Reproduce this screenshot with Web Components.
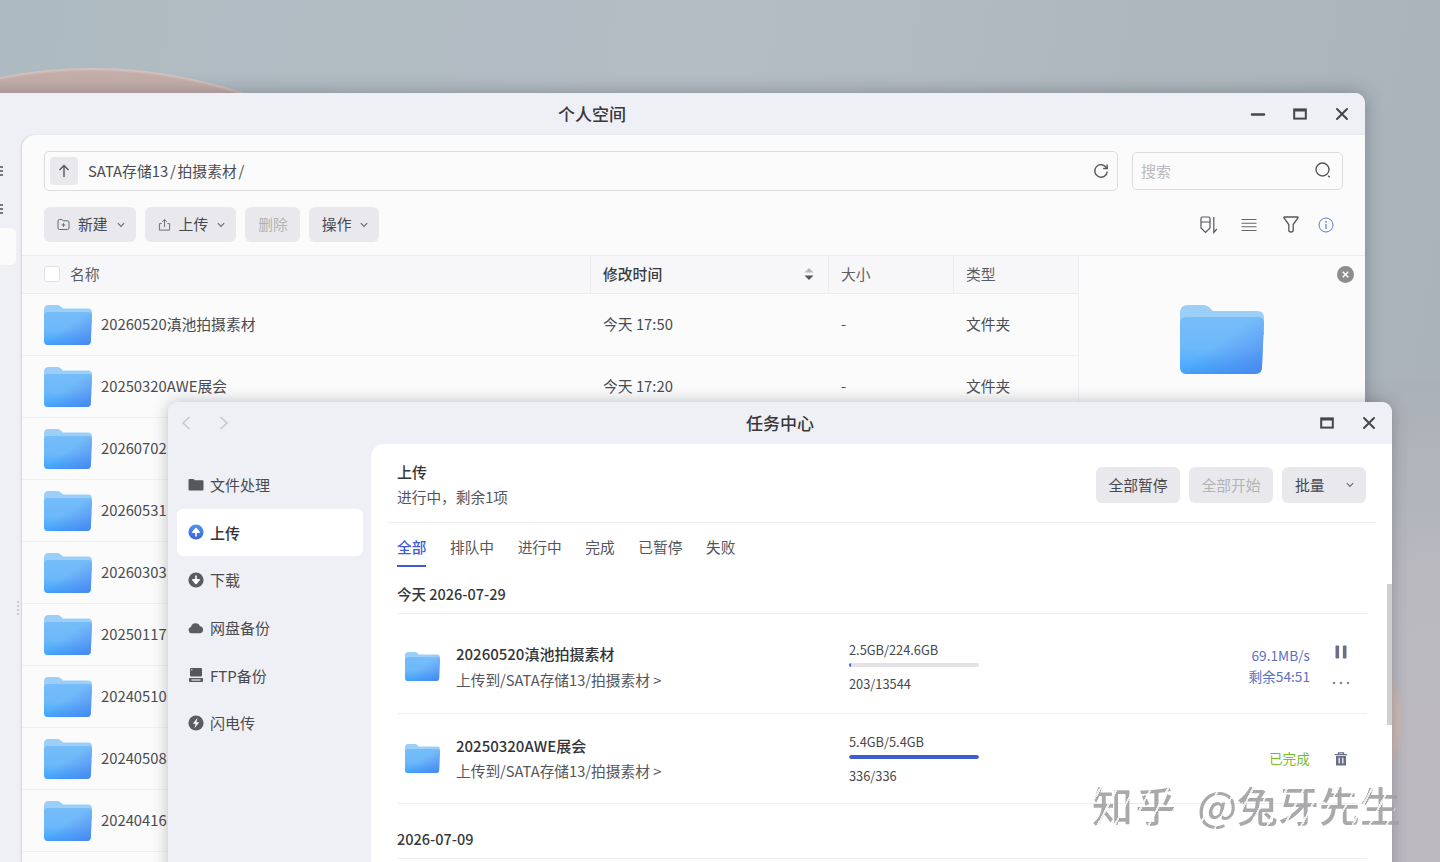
<!DOCTYPE html>
<html lang="zh-CN">
<head>
<meta charset="utf-8">
<title>个人空间</title>
<style>
    html, body { margin: 0; height: 100%; overflow: hidden; }
    body { font-family: "Noto Sans CJK SC", "Noto Sans", sans-serif; color: #44454a; }
</style>
</head>
<body>
<desk-top>
    <file-window>
        <file-row name="20260520滇池拍摄素材" date="今天 17:50"></file-row>
        <file-row name="20250320AWE展会" date="今天 17:20"></file-row>
        <file-row name="20260702"></file-row>
        <file-row name="20260531"></file-row>
        <file-row name="20260303"></file-row>
        <file-row name="20250117"></file-row>
        <file-row name="20240510"></file-row>
        <file-row name="20240508"></file-row>
        <file-row name="20240416"></file-row>
    </file-window>
    <task-window>
        <side-item icon="folder" label="文件处理"></side-item>
        <side-item icon="upload" label="上传" active></side-item>
        <side-item icon="download" label="下载"></side-item>
        <side-item icon="cloud" label="网盘备份"></side-item>
        <side-item icon="ftp" label="FTP备份"></side-item>
        <side-item icon="flash" label="闪电传"></side-item>
        <task-group slot="list" title="今天 2026-07-29"></task-group>
        <task-item slot="list" tall name="20260520滇池拍摄素材" size="2.5GB/224.6GB" count="203/13544" percent="1.5"></task-item>
        <task-item slot="list" done name="20250320AWE展会" size="5.4GB/5.4GB" count="336/336" percent="100"></task-item>
        <task-group slot="list" late title="2026-07-09"></task-group>
    </task-window>
    <water-mark><span style="letter-spacing:2.5px">知乎</span> @兔牙先生</water-mark>
</desk-top>

<script>
/**
 * Icones dessinees en SVG, reprises par tous les composants
 */
const ICONS = {
    min: '<svg width="16" height="16" viewBox="0 0 16 16"><path d="M2 8.5h12" stroke="#45464b" stroke-width="2.4" stroke-linecap="round"/></svg>',
    max: '<svg width="16" height="16" viewBox="0 0 16 16"><rect x="2.2" y="3.4" width="11.6" height="9.2" fill="none" stroke="#45464b" stroke-width="2"/><path d="M2 4.4h12" stroke="#45464b" stroke-width="2"/></svg>',
    close: '<svg width="16" height="16" viewBox="0 0 16 16"><path d="M3 3l10 10M13 3L3 13" stroke="#45464b" stroke-width="2" stroke-linecap="round"/></svg>',
    up: '<svg width="14" height="14" viewBox="0 0 14 14"><path d="M7 13V1.500M2.500 6L7 1.500 11.500 6" fill="none" stroke="#55565b" stroke-width="1.400"/></svg>',
    refresh: '<svg width="16" height="16" viewBox="0 0 16 16"><path d="M13.600 5A6.300 6.300 0 1 0 14.300 8.600" fill="none" stroke="#55565b" stroke-width="1.400"/><path d="M14.200 1.500V5.500H10.200" fill="none" stroke="#55565b" stroke-width="1.400"/></svg>',
    search: '<svg width="18" height="18" viewBox="0 0 18 18"><circle cx="8.500" cy="8.500" r="6.500" fill="none" stroke="#55565b" stroke-width="1.400"/><path d="M14.200 14.800l1.500 1.500" stroke="#55565b" stroke-width="1.400"/></svg>',
    chevron: '<svg width="8" height="6" viewBox="0 0 8 6"><path d="M.8 1.200L4 4.400l3.200-3.200" fill="none" stroke="#66676c" stroke-width="1.100"/></svg>',
    newFolder: '<svg width="13" height="13" viewBox="0 0 13 13"><path d="M1 3q0-1.500 1.500-1.500h2.500l1.200 1.300h4.300q1.500 0 1.500 1.500v5.700q0 1.500-1.500 1.500h-8q-1.500 0-1.500-1.500z" fill="none" stroke="#66676c"/><path d="M6.500 5.200v3.600M4.700 7h3.600" stroke="#66676c"/></svg>',
    share: '<svg width="13" height="14" viewBox="0 0 14 14"><path d="M4 5.500H1.500v7h11v-7H10" fill="none" stroke="#66676c"/><path d="M7 9V1.200M4.500 3.600L7 1.200l2.500 2.400" fill="none" stroke="#66676c"/></svg>',
    sort: '<svg width="18" height="18" viewBox="0 0 18 18"><path d="M1 2.500q0-1.500 1.500-1.500h6q1.500 0 1.500 1.500V12l-4.500 4.500L1 12z" fill="none" stroke="#55565b" stroke-width="1.200"/><path d="M1 6h9" stroke="#55565b" stroke-width="1.200"/><path d="M13.800 1v15.500l3-3.500" fill="none" stroke="#55565b" stroke-width="1.200"/></svg>',
    list: '<svg width="16" height="16" viewBox="0 0 16 16"><path d="M.5 2.500h15M.5 6.200h15M.5 9.800h15M.5 13.500h15" stroke="#66676c" stroke-width="1.100"/></svg>',
    filter: '<svg width="16" height="17" viewBox="0 0 16 17"><path d="M1.500 1h13q1 0 .4 1l-4.700 6.500V14q0 2-2.200 2t-2.200-2V8.500L1 2q-.5-1 .5-1z" fill="none" stroke="#55565b" stroke-width="1.300"/></svg>',
    info: '<svg width="16" height="16" viewBox="0 0 16 16"><circle cx="8" cy="8" r="7" fill="none" stroke="#5f7cc9" stroke-width="1"/><path d="M8 7v5" stroke="#5f7cc9" stroke-width="1.200"/><circle cx="8" cy="4.800" r=".9" fill="#5f7cc9"/></svg>',
    sortCaret: '<svg width="10" height="12" viewBox="0 0 10 12"><path d="M5 0l4.500 4.500h-9z" fill="#b5b6ba"/><path d="M5 12L.5 7.500h9z" fill="#55565b"/></svg>',
    dismiss: '<svg width="17" height="17" viewBox="0 0 17 17"><circle cx="8.500" cy="8.500" r="8.500" fill="#8d8d8f"/><path d="M5.700 5.700l5.600 5.600M11.300 5.700l-5.600 5.600" stroke="#fff" stroke-width="1.500"/></svg>',
    back: '<svg width="10" height="14" viewBox="0 0 10 14"><path d="M8.500 1L2 7l6.500 6" fill="none" stroke="#c6c8cd" stroke-width="1.500"/></svg>',
    forward: '<svg width="10" height="14" viewBox="0 0 10 14"><path d="M1.500 1L8 7l-6.500 6" fill="none" stroke="#c6c8cd" stroke-width="1.500"/></svg>',
    folder: '<svg width="16" height="16" viewBox="0 0 16 16"><path d="M.5 3q0-1 1-1h4l1.300 1.200h7.700q1 0 1 1v8.300q0 1-1 1h-13q-1 0-1-1z" fill="#56575c"/></svg>',
    upload: '<svg width="16" height="16" viewBox="0 0 16 16"><defs><linearGradient id="u" x1="0" y1="0" x2="0" y2="1"><stop offset="0" stop-color="#4f97ee"/><stop offset="1" stop-color="#3f63dc"/></linearGradient></defs><circle cx="8" cy="8" r="7.600" fill="url(#u)"/><path d="M8 12.500V6.800M4.800 8.200L8 4.500l3.200 3.700z" stroke="#fff" stroke-width="1.600" fill="#fff" stroke-linejoin="round"/></svg>',
    download: '<svg width="16" height="16" viewBox="0 0 16 16"><circle cx="8" cy="8" r="7.600" fill="#5b5c61"/><path d="M8 3.500v5.700M4.800 7.800L8 11.500l3.200-3.700z" stroke="#fff" stroke-width="1.600" fill="#fff" stroke-linejoin="round"/></svg>',
    cloud: '<svg width="16" height="16" viewBox="0 0 16 16"><path d="M3.600 13.200a3.100 3.100 0 0 1-.6-6.100A4.600 4.600 0 0 1 11.900 6.300a3.500 3.500 0 0 1 .4 6.900z" fill="#5b5c61"/></svg>',
    ftp: '<svg width="16" height="16" viewBox="0 0 16 16"><rect x="2" y="1" width="12" height="8.500" rx="1" fill="#56575c"/><rect x="1" y="11" width="14" height="4" rx="1" fill="#56575c"/><rect x="3.400" y="12.400" width="9.200" height="1.200" fill="#eff0f5"/><circle cx="3.800" cy="2.900" r=".7" fill="#eff0f5"/></svg>',
    flash: '<svg width="16" height="16" viewBox="0 0 16 16"><circle cx="8" cy="8" r="7.600" fill="#5b5c61"/><path d="M9.500 2.800L4.800 8.800h2.800l-1.100 4.400 4.700-6h-2.800z" fill="#fff"/></svg>',
    pause: '<svg width="14" height="14" viewBox="0 0 14 14"><rect x="1.500" y=".5" width="3.600" height="13" rx=".8" fill="#696d87"/><rect x="8.900" y=".5" width="3.600" height="13" rx=".8" fill="#696d87"/></svg>',
    more: '<svg width="18" height="4" viewBox="0 0 18 4"><circle cx="2" cy="2" r="1.300" fill="#8b8c90"/><circle cx="9" cy="2" r="1.300" fill="#8b8c90"/><circle cx="16" cy="2" r="1.300" fill="#8b8c90"/></svg>',
    trash: '<svg width="14" height="14" viewBox="0 0 14 14"><path d="M.8 2.600h12.400M4.500 2.400V.8h5v1.600" fill="none" stroke="#696d87" stroke-width="1.300"/><path d="M2 4h10v9.500H2z" fill="#696d87"/><path d="M5.200 5.800v5.800M8.800 5.800v5.800" stroke="#fff" stroke-width="1.200"/></svg>'
};

class FolderIcon extends HTMLElement {
    constructor() {
        super();
        const width = this.getAttribute('width') || 48;
        const height = this.getAttribute('height') || 40;
        const root = this.attachShadow({mode: 'open'});
        root.innerHTML = `
            <style>
                :host { display: inline-flex; flex: none; }
            </style>
            <svg width="${width}" height="${height}" viewBox="0 0 84 69" preserveAspectRatio="none">
                <defs>
                    <linearGradient id="down" x1="0" y1="0" x2="0" y2="1">
                        <stop offset="0" stop-color="#76bdf9"/>
                        <stop offset=".55" stop-color="#6db8fa"/>
                        <stop offset="1" stop-color="#3fa6fc"/>
                    </linearGradient>
                    <linearGradient id="side" x1="0" y1="0" x2="1" y2="1">
                        <stop offset=".45" stop-color="#4a7fee" stop-opacity="0"/>
                        <stop offset="1" stop-color="#4a7fee" stop-opacity=".8"/>
                    </linearGradient>
                </defs>
                <path d="M0 8Q0 0 8 0H24Q27 0 30 3L33 6H77Q84 6 84 13V30H0Z" fill="#9bcff8"/>
                <path d="M6 12H78Q84 12 84 18L82 62Q82 69 75 69H6Q0 69 0 62V18Q0 12 6 12Z" fill="url(#down)"/>
                <path d="M6 12H78Q84 12 84 18L82 62Q82 69 75 69H6Q0 69 0 62V18Q0 12 6 12Z" fill="url(#side)"/>
            </svg>`;
    }
}

class TitleBar extends HTMLElement {
    constructor() {
        super();
        const title = this.getAttribute('title') || '';
        const buttons = (this.getAttribute('buttons') || 'max,close').split(',');
        const root = this.attachShadow({mode: 'open'});
        root.innerHTML = `
            <style>
                :host {
                    display: grid;
                    grid-template-columns: 1fr auto 1fr;
                    align-items: center;
                    height: 42px;
                    background: #eff0f5;
                    flex: none;
                }
                .title { font-size: 17px; font-weight: 500; color: #37383c; padding-bottom: 2px; }
                .buttons { display: flex; justify-content: flex-end; gap: 26px; padding-right: 15px; }
                .buttons span { display: flex; }
                .left { display: flex; }
            </style>
            <div class="left"><slot></slot></div>
            <div class="title">${title}</div>
            <div class="buttons">${buttons.map((b) => `<span>${ICONS[b]}</span>`).join('')}</div>`;
    }
}

class ToolButton extends HTMLElement {
    constructor() {
        super();
        const icon = this.getAttribute('icon');
        const menu = this.hasAttribute('menu');
        const root = this.attachShadow({mode: 'open'});
        root.innerHTML = `
            <style>
                :host {
                    display: inline-flex;
                    align-items: center;
                    height: 100%;
                    padding: 0 11px 0 13px;
                    box-sizing: border-box;
                    background: #e9e9ed;
                    border-radius: 6px;
                    font-size: 14.8px;
                    color: #47484d;
                    white-space: nowrap;
                }
                :host([disabled]) { color: #b2b3b7; padding: 0 12px 0 13px; }
                span { display: flex; }
                .icon { margin-right: 8px; }
                .text { padding-bottom: 2px; }
                .menu { margin-left: var(--menu-gap, 9px); }
            </style>
            ${icon ? `<span class="icon">${ICONS[icon]}</span>` : ''}
            <span class="text"><slot></slot></span>
            ${menu ? `<span class="menu">${ICONS.chevron}</span>` : ''}`;
    }
}

class FileRow extends HTMLElement {
    constructor() {
        super();
        const name = this.getAttribute('name') || '';
        const date = this.getAttribute('date') || '';
        const root = this.attachShadow({mode: 'open'});
        root.innerHTML = `
            <style>
                :host {
                    display: grid;
                    grid-template-columns: 568px 238px 125px 125px;
                    height: 62px;
                    box-sizing: border-box;
                    border-bottom: 1px solid #f0f0f3;
                    align-items: center;
                    font-size: 14.8px;
                    color: #4a4b50;
                }
                .name { display: flex; align-items: center; gap: 9px; padding-left: 22px; white-space: nowrap; }
                .name span { padding-bottom: 2px; }
                .cell { padding: 0 0 2px 13px; }
            </style>
            <div class="name"><folder-icon></folder-icon><span>${name}</span></div>
            ${date ? `<div class="cell">${date}</div><div class="cell">-</div><div class="cell">文件夹</div>` : ''}`;
    }
}

class FileWindow extends HTMLElement {
    constructor() {
        super();
        const root = this.attachShadow({mode: 'open'});
        root.innerHTML = `
            <style>
                :host {
                    position: absolute;
                    left: -181px;
                    top: 93px;
                    width: 1546px;
                    height: 820px;
                    display: flex;
                    flex-direction: column;
                    background: #eff0f5;
                    border-radius: 10px 10px 0 0;
                    box-shadow: 0 0 18px rgba(40, 45, 55, .35);
                    overflow: hidden;
                }
                .body { flex: 1; display: grid; grid-template-columns: 203px 1fr; min-height: 0; }
                .side { position: relative; display: flex; flex-direction: column; gap: 1px; padding: 17px 6px 0 0; }
                .side div { height: 37px; display: flex; align-items: center; justify-content: flex-end; padding-right: 13px; }
                .side i { display: block; width: 4px; height: 10px; background: repeating-linear-gradient(#77787c 0 2px, transparent 2px 4px); }
                .side .on { background: #fbfbfc; border-radius: 0 5px 5px 0; }
                .handle { position: absolute; left: 198px; top: 466px; width: 2px; height: 14px; background: repeating-linear-gradient(#c9cace 0 2px, transparent 2px 4px); }
                .panel {
                    display: flex;
                    flex-direction: column;
                    background: #fbfbfc;
                    border-radius: 13px 0 0 0;
                    box-shadow: -1px 0 2px rgba(0, 0, 0, .12);
                    min-width: 0;
                }
                .pathrow { display: flex; align-items: center; gap: 14px; padding: 16px 22px 0; }
                .path {
                    flex: 1;
                    height: 40px;
                    display: flex;
                    align-items: center;
                    padding: 0 8px 0 5px;
                    box-sizing: border-box;
                    border: 1px solid #dcdcdf;
                    border-radius: 5px;
                    font-size: 14.8px;
                    color: #4a4b50;
                }
                .up { width: 28px; height: 28px; display: flex; align-items: center; justify-content: center; background: #e9e9ed; border-radius: 4px; margin-right: 10px; }
                .crumbs { flex: 1; word-spacing: -1.500px; padding-bottom: 2px; }
                .path span, .search span { display: flex; }
                .search {
                    width: 211px;
                    height: 38px;
                    display: flex;
                    align-items: center;
                    justify-content: space-between;
                    padding: 0 10px 2px 8px;
                    box-sizing: border-box;
                    border: 1px solid #dcdcdf;
                    border-radius: 5px;
                    font-size: 15px;
                    color: #b9babd;
                }
                .toolbar { display: flex; align-items: center; height: 35px; margin-top: 16px; padding: 0 31px 0 22px; gap: 9px; }
                .tools { margin-left: auto; display: flex; align-items: center; }
                .tools span { display: flex; }
                .main { flex: 1; display: grid; grid-template-columns: 1057px 1fr; margin-top: 13px; border-top: 1px solid #ececef; min-height: 0; }
                .table { border-right: 1px solid #f0f0f3; min-width: 0; }
                .head {
                    display: grid;
                    grid-template-columns: 568px 238px 125px 125px;
                    height: 38px;
                    box-sizing: border-box;
                    background: #f7f7f9;
                    border-bottom: 1px solid #ececef;
                    font-size: 14.8px;
                    color: #5c5d62;
                }
                .head div { display: flex; align-items: center; padding: 0 0 2px 12px; border-left: 1px solid #ececef; }
                .head .first { padding-left: 22px; border-left: 0; gap: 10px; }
                .check { width: 14px; height: 14px; background: #fff; border: 1px solid #e2e2e5; border-radius: 3px; }
                .head b { font-weight: 500; color: #3a3b3f; flex: 1; }
                .head .caret { display: flex; padding: 0 14px 0 0; border: 0; }
                .info { position: relative; display: flex; justify-content: center; padding-top: 49px; }
                .dismiss { position: absolute; right: 11px; top: 10px; display: flex; }
            </style>
            <title-bar title="个人空间" buttons="min,max,close"></title-bar>
            <div class="body">
                <div class="side">
                    <div><i></i></div>
                    <div><i></i></div>
                    <div class="on"></div>
                    <span class="handle"></span>
                </div>
                <div class="panel">
                    <div class="pathrow">
                        <div class="path">
                            <span class="up">${ICONS.up}</span>
                            <div class="crumbs">SATA存储13 / 拍摄素材 /</div>
                            <span>${ICONS.refresh}</span>
                        </div>
                        <div class="search">搜索<span>${ICONS.search}</span></div>
                    </div>
                    <div class="toolbar">
                        <tool-button icon="newFolder" menu>新建</tool-button>
                        <tool-button icon="share" menu>上传</tool-button>
                        <tool-button disabled>删除</tool-button>
                        <tool-button menu>操作</tool-button>
                        <div class="tools">
                            <span style="margin-right:23px">${ICONS.sort}</span>
                            <span style="margin-right:26px">${ICONS.list}</span>
                            <span style="margin-right:19px">${ICONS.filter}</span>
                            <span>${ICONS.info}</span>
                        </div>
                    </div>
                    <div class="main">
                        <div class="table">
                            <div class="head">
                                <div class="first"><span class="check"></span>名称</div>
                                <div><b>修改时间</b><span class="caret">${ICONS.sortCaret}</span></div>
                                <div>大小</div>
                                <div>类型</div>
                            </div>
                            <slot></slot>
                        </div>
                        <div class="info">
                            <span class="dismiss">${ICONS.dismiss}</span>
                            <folder-icon width="84" height="69"></folder-icon>
                        </div>
                    </div>
                </div>
            </div>`;
    }
}

class SideItem extends HTMLElement {
    constructor() {
        super();
        const icon = this.getAttribute('icon');
        const label = this.getAttribute('label') || '';
        const root = this.attachShadow({mode: 'open'});
        root.innerHTML = `
            <style>
                :host {
                    display: flex;
                    align-items: center;
                    gap: 6px;
                    height: 47.6px;
                    padding-left: 11px;
                    box-sizing: border-box;
                    border-radius: 6px;
                    font-size: 15px;
                    color: #4a4b50;
                }
                :host([active]) { background: #fff; font-weight: 500; color: #303135; }
                span { display: flex; }
            </style>
            <span>${ICONS[icon]}</span>${label}`;
    }
}

class TaskGroup extends HTMLElement {
    constructor() {
        super();
        const title = this.getAttribute('title') || '';
        const root = this.attachShadow({mode: 'open'});
        root.innerHTML = `
            <style>
                :host {
                    display: flex;
                    align-items: flex-end;
                    height: 47px;
                    padding-bottom: 9px;
                    box-sizing: border-box;
                    border-bottom: 1px solid #eeeef0;
                    font-size: 14.5px;
                    line-height: 20px;
                    font-weight: 500;
                    color: #36373b;
                }
                :host([late]) { height: 55px; }
            </style>
            ${title}`;
    }
}

class TaskItem extends HTMLElement {
    constructor() {
        super();
        const name = this.getAttribute('name') || '';
        const size = this.getAttribute('size') || '';
        const count = this.getAttribute('count') || '';
        const percent = this.getAttribute('percent') || 0;
        const done = this.hasAttribute('done');
        const root = this.attachShadow({mode: 'open'});
        root.innerHTML = `
            <style>
                :host {
                    display: grid;
                    grid-template-columns: 59px 393px 200px 261px 57px;
                    align-items: center;
                    height: 90px;
                    box-sizing: border-box;
                    border-bottom: 1px solid #eeeef0;
                    color: #48494e;
                }
                :host([tall]) { height: 100px; padding-top: 6px; }
                .icon { display: flex; padding-left: 8px; }
                .text { padding-bottom: 2px; }
                :host([tall]) .text { padding-bottom: 1px; }
                :host([tall]) .to { margin-top: 1px; }
                .name { font-size: 15px; line-height: 25px; font-weight: 500; color: #333438; }
                .to { font-size: 14.7px; line-height: 25px; color: #55565b; }
                .numbers { font-size: 12.800px; line-height: 18px; color: #47484d; }
                .bar { width: 130px; height: 4px; margin: 4px 0 8px; background: #e3e3e6; border-radius: 2px; overflow: hidden; }
                .bar i { display: block; height: 100%; background: #3f5bd5; border-radius: 2px; }
                .status { text-align: right; font-size: 13.700px; line-height: 21px; color: #5b70c6; white-space: nowrap; }
                :host([tall]) .status { padding-bottom: 2px; }
                .status.done { color: #79bf27; }
                .actions { display: flex; flex-direction: column; align-items: center; padding-left: 5px; }
                :host([tall]) .actions { gap: 22px; padding-bottom: 3px; }
                .actions span { display: flex; }
            </style>
            <div class="icon"><folder-icon width="35" height="29"></folder-icon></div>
            <div class="text">
                <div class="name">${name}</div>
                <div class="to">上传到/SATA存储13/拍摄素材 &gt;</div>
            </div>
            <div class="numbers">
                <div>${size}</div>
                <div class="bar"><i style="width:${percent}%"></i></div>
                <div>${count}</div>
            </div>
            ${done ? '<div class="status done">已完成</div>' : '<div class="status">69.1MB/s<br>剩余54:51</div>'}
            <div class="actions">
                ${done ? `<span>${ICONS.trash}</span>` : `<span>${ICONS.pause}</span><span>${ICONS.more}</span>`}
            </div>`;
    }
}

class TaskWindow extends HTMLElement {
    constructor() {
        super();
        const tabs = ['全部', '排队中', '进行中', '完成', '已暂停', '失败'];
        const root = this.attachShadow({mode: 'open'});
        root.innerHTML = `
            <style>
                :host {
                    position: absolute;
                    left: 168px;
                    top: 402px;
                    width: 1224px;
                    height: 500px;
                    display: flex;
                    flex-direction: column;
                    background: #eff0f5;
                    border-radius: 10px 10px 0 0;
                    box-shadow: 0 0 16px rgba(40, 45, 55, .3);
                    overflow: hidden;
                }
                .nav { display: flex; gap: 28px; padding-left: 13px; }
                .nav span { display: flex; }
                .body { flex: 1; display: grid; grid-template-columns: 203px 1fr; min-height: 0; }
                .side { padding: 17px 8px 0 9px; }
                .panel { position: relative; background: #fff; border-radius: 13px 0 0 0; min-width: 0; }
                .header {
                    display: flex;
                    justify-content: space-between;
                    align-items: center;
                    height: 79px;
                    margin: 0 16px 0 17px;
                    padding: 2px 10px 0 9px;
                    box-sizing: border-box;
                    border-bottom: 1px solid #eeeef0;
                }
                .title { font-size: 15px; line-height: 25px; font-weight: 500; color: #333438; }
                .sub { font-size: 14.7px; line-height: 25px; color: #55565b; }
                .buttons { display: flex; gap: 9px; height: 36px; margin-top: 2px; }
                .buttons tool-button { width: 84px; justify-content: center; padding: 0; }
                .buttons .batch { justify-content: flex-start; padding-left: 13px; --menu-gap: 21px; }
                .tabs { display: flex; gap: 23.6px; height: 44px; margin: 0 25px 0 26px; font-size: 14.7px; color: #55565b; }
                .tabs div { display: flex; align-items: center; padding-top: 2px; box-sizing: border-box; white-space: nowrap; }
                .tabs .on { color: #3f5bd5; font-weight: 500; border-bottom: 2px solid #3f5bd5; padding-top: 4px; }
                .list { margin: 0 25px 0 26px; }
                .scroll { position: absolute; right: 0; top: 140px; width: 5px; height: 141px; background: #cfcfd2; }
            </style>
            <title-bar title="任务中心">
                <div class="nav"><span>${ICONS.back}</span><span>${ICONS.forward}</span></div>
            </title-bar>
            <div class="body">
                <div class="side"><slot></slot></div>
                <div class="panel">
                    <div class="header">
                        <div>
                            <div class="title">上传</div>
                            <div class="sub">进行中，剩余1项</div>
                        </div>
                        <div class="buttons">
                            <tool-button>全部暂停</tool-button>
                            <tool-button disabled>全部开始</tool-button>
                            <tool-button class="batch" menu>批量</tool-button>
                        </div>
                    </div>
                    <div class="tabs">
                        ${tabs.map((t, i) => `<div class="${i === 0 ? 'on' : ''}">${t}</div>`).join('')}
                    </div>
                    <div class="list"><slot name="list"></slot></div>
                    <div class="scroll"></div>
                </div>
            </div>`;
    }
}

class WaterMark extends HTMLElement {
    constructor() {
        super();
        const root = this.attachShadow({mode: 'open'});
        root.innerHTML = `
            <style>
                :host {
                    position: absolute;
                    left: 1092px;
                    top: 774px;
                    font-size: 41px;
                    line-height: 60px;
                    font-weight: 500;
                    word-spacing: 9px;
                    white-space: nowrap;
                    color: transparent;
                    background: repeating-linear-gradient(118deg, rgba(160, 160, 162, .9) 0 13px, rgba(225, 225, 226, .6) 13px 15px);
                    -webkit-background-clip: text;
                    background-clip: text;
                }
            </style>
            <slot></slot>`;
    }
}

class DeskTop extends HTMLElement {
    constructor() {
        super();
        const root = this.attachShadow({mode: 'open'});
        root.innerHTML = `
            <style>
                :host {
                    display: block;
                    position: relative;
                    width: 1440px;
                    height: 862px;
                    overflow: hidden;
                    background: linear-gradient(100deg, #aebac1 0%, #b4bcc4 45%, #aab3ba 95%);
                }
                .low { position: absolute; left: 1200px; top: 380px; width: 240px; height: 482px; background: linear-gradient(#aab1b8, #bbb9c0 45%, #bdb9c1); }
                .arc { position: absolute; left: -383px; top: 68px; width: 950px; height: 950px; border-radius: 50%; background: #c4aeaa; box-shadow: inset 0 2px 2px #d3c4c0; }
                .right { position: absolute; left: 1195px; top: 615px; width: 206px; height: 210px; border-radius: 50%; background: #cdb9b5; filter: blur(2px); }
            </style>
            <div class="low"></div>
            <div class="arc"></div>
            <div class="right"></div>
            <slot></slot>`;
    }
}

customElements.define('folder-icon', FolderIcon);
customElements.define('title-bar', TitleBar);
customElements.define('tool-button', ToolButton);
customElements.define('file-row', FileRow);
customElements.define('file-window', FileWindow);
customElements.define('side-item', SideItem);
customElements.define('task-group', TaskGroup);
customElements.define('task-item', TaskItem);
customElements.define('task-window', TaskWindow);
customElements.define('water-mark', WaterMark);
customElements.define('desk-top', DeskTop);
</script>
</body>
</html>
